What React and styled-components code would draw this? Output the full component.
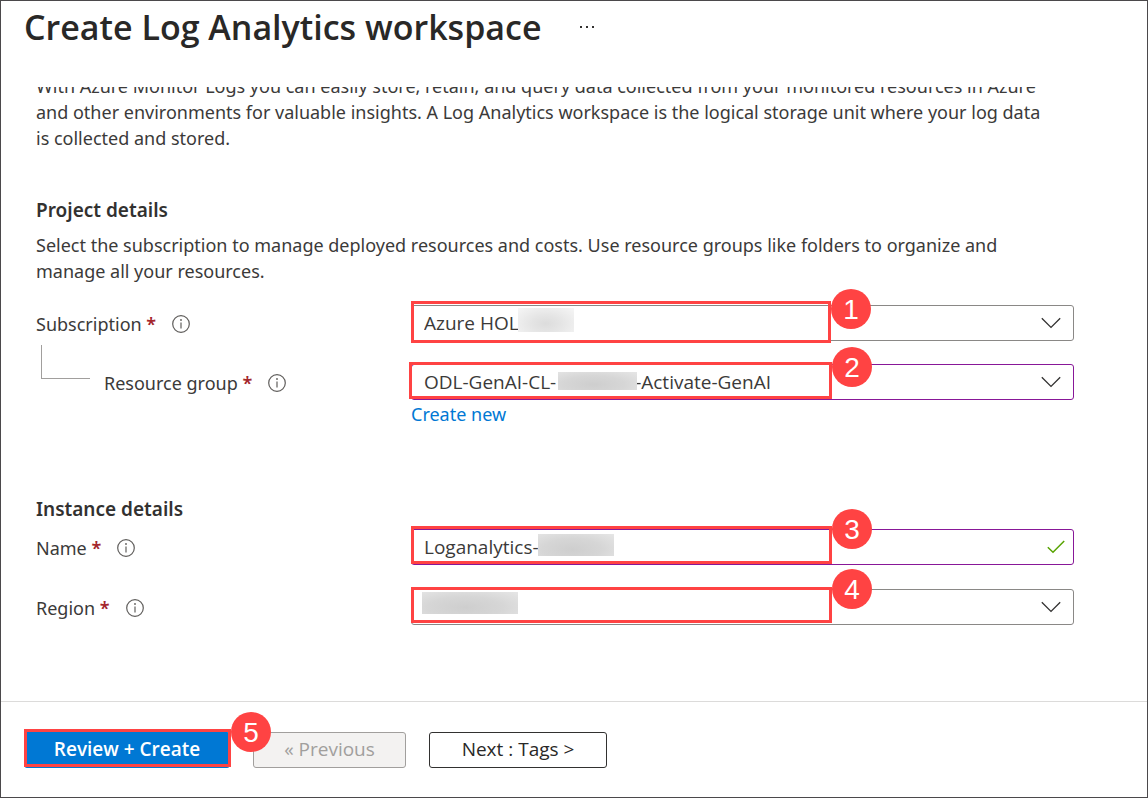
import React from "react";
import styled, { createGlobalStyle } from "styled-components";

const textFont = `"Segoe UI", "Noto Sans", sans-serif`;
const controlFont = `"Segoe UI", "Open Sans", sans-serif`;

const GlobalStyle = createGlobalStyle`
  *, *::before, *::after { box-sizing: border-box; }
  body {
    margin: 0;
    background: #fff;
    color: #3b3a39;
    font-family: ${textFont};
    font-size: 18px;
    line-height: 26px;
  }
`;

const Page = styled.div`
  display: flex;
  flex-direction: column;
  min-height: 100vh;
  border: 1px solid #4b494b;
`;

const Header = styled.header`
  display: flex;
  align-items: center;
  gap: 37px;
  height: 86px;
  padding: 0 23px 34px;
`;

const Title = styled.h1`
  margin: 0;
  font-family: ${controlFont};
  font-size: 34px;
  line-height: 48px;
  font-weight: 600;
  color: #292827;
  white-space: nowrap;
`;

const MoreButton = styled.button`
  display: flex;
  padding: 0;
  border: 0;
  background: none;
`;

const Content = styled.main`
  flex: 1;
  overflow: hidden;
  padding: 0 73px 40px 35px;
`;

const Text = styled.p`
  max-width: 1012px;
  margin: 0;
`;

const Intro = styled(Text)`
  margin-top: -14px;
`;

const Section = styled.section`
  margin-top: ${(p) => p.$gap}px;
`;

const SectionTitle = styled.h2`
  margin: 0;
  padding-bottom: ${(p) => p.$gap}px;
  color: #323130;
  font-size: 19px;
  line-height: 26px;
  font-weight: 600;
`;

const Row = styled.div`
  display: grid;
  grid-template-columns: 375px minmax(0, 1fr);
  margin-top: ${(p) => p.$gap}px;
`;

const LabelCell = styled.div`
  display: flex;
  align-items: center;
  height: 36px;
  padding-top: 2px;
`;

const Label = styled.label`
  margin-right: 16px;
`;

const Required = styled.span`
  color: #a4262c;
  font-weight: 600;
`;

const Branch = styled.span`
  align-self: flex-start;
  width: 49px;
  height: 34px;
  margin: -21px 14px 0 5px;
  border: solid #a19f9d;
  border-width: 0 0 1px 1px;
`;

const Field = styled.div`
  position: relative;
  height: 36px;
`;

const controlStyle = `
  display: block;
  width: 100%;
  height: 36px;
  padding: 0 12px;
  border-radius: 3px;
  background: #fff;
  color: #3b3a39;
  font: 19px/26px ${controlFont};
  outline: none;
`;

const Select = styled.select`
  ${controlStyle}
  appearance: none;
  border: 1px solid ${(p) => (p.$edited ? "#881798" : "#8a8886")};
`;

const Input = styled.input`
  ${controlStyle}
  border: 1px solid ${(p) => (p.$edited ? "#881798" : "#8a8886")};
`;

const FieldIcon = styled.span`
  position: absolute;
  top: 0;
  right: ${(p) => p.$right}px;
  display: flex;
  align-items: center;
  height: 36px;
  pointer-events: none;
`;

const Redaction = styled.span`
  position: absolute;
  top: ${(p) => p.$top}px;
  left: ${(p) => p.$left}px;
  width: ${(p) => p.$width}px;
  height: ${(p) => p.$height}px;
  background: ${(p) =>
    p.$light
      ? "radial-gradient(ellipse at 50% 65%, #dcdcdc 0%, #e4e4e4 35%, #f6f6f6 100%)"
      : "radial-gradient(ellipse at 45% 70%, #cecece 0%, #d6d6d6 50%, #e6e6e6 100%)"};
  pointer-events: none;
`;

const Highlight = styled.span`
  position: absolute;
  top: ${(p) => p.$top}px;
  left: ${(p) => p.$left || 0}px;
  width: ${(p) => p.$width}px;
  height: ${(p) => p.$height}px;
  border: 3px solid #ff4343;
  pointer-events: none;
`;

const Badge = styled.span`
  position: absolute;
  top: ${(p) => p.$top}px;
  left: ${(p) => p.$left}px;
  z-index: 1;
  width: 40px;
  height: 40px;
  border-radius: 50%;
  background: #ff4343;
  color: #fff;
  font: 28px/42px "Liberation Sans", Arial, sans-serif;
  text-align: center;
  pointer-events: none;
`;

const LinkLine = styled.div`
  grid-column: 2;
  line-height: 28px;
`;

const Link = styled.a`
  color: #0078d4;
  text-decoration: none;
`;

const Footer = styled.footer`
  display: flex;
  gap: 23px;
  padding: 30px 23px 29px;
  border-top: 1px solid #dcdbda;
`;

const ButtonSlot = styled.div`
  position: relative;
`;

const Button = styled.button`
  width: ${(p) => p.$width}px;
  height: 36px;
  padding: 0 0 2px;
  border: 1px solid #323130;
  border-radius: 3px;
  background: #fff;
  color: #292827;
  font: 500 19px/26px ${controlFont};

  &:disabled {
    border-color: #a19f9d;
    background: #f3f2f1;
    color: #a19f9d;
  }
`;

const PrimaryButton = styled(Button)`
  border-color: #0078d4;
  background: #0078d4;
  color: #fff;
  font-weight: 600;
`;

const InfoIcon = () => (
  <svg width="18" height="18" viewBox="0 0 18 18" fill="none" aria-hidden="true">
    <circle cx="9" cy="9" r="8.3" stroke="#605e5c" strokeWidth="1.2" />
    <path d="M9 7.4v6" stroke="#605e5c" strokeWidth="1.2" />
    <circle cx="9" cy="5" r="0.9" fill="#605e5c" />
  </svg>
);

const Chevron = () => (
  <svg width="20" height="12" viewBox="0 0 20 12" fill="none" aria-hidden="true">
    <path d="M0.8 1.2L10 10.4L19.2 1.2" stroke="#323130" strokeWidth="1.3" />
  </svg>
);

const Check = () => (
  <svg width="18" height="14" viewBox="0 0 18 14" fill="none" aria-hidden="true">
    <path d="M0.8 7.2L6 12.2L17.2 1" stroke="#57a300" strokeWidth="1.5" />
  </svg>
);

const nbsp = (count) => "\u00a0".repeat(count);

function FieldLabel({ htmlFor, children, nested }) {
  return (
    <LabelCell>
      {nested && <Branch />}
      <Label htmlFor={htmlFor}>
        {children} <Required>*</Required>
      </Label>
      <InfoIcon />
    </LabelCell>
  );
}

export default function App() {
  return (
    <>
      <GlobalStyle />
      <Page>
        <Header>
          <Title>Create Log Analytics workspace</Title>
          <MoreButton type="button" aria-label="More actions">
            <svg width="18" height="4" viewBox="0 0 18 4" fill="#323130" aria-hidden="true">
              <rect x="1" y="1" width="2" height="2" />
              <rect x="7" y="1" width="2" height="2" />
              <rect x="13" y="1" width="2" height="2" />
            </svg>
          </MoreButton>
        </Header>

        <Content>
          <Intro>
            With Azure Monitor Logs you can easily store, retain, and query data collected from your
            monitored resources in Azure and other environments for valuable insights. A Log
            Analytics workspace is the logical storage unit where your log data is collected and
            stored.
          </Intro>

          <Section $gap={46}>
            <SectionTitle $gap={9}>Project details</SectionTitle>
            <Text>
              Select the subscription to manage deployed resources and costs. Use resource groups
              like folders to organize and manage all your resources.
            </Text>
            <Row $gap={21}>
              <FieldLabel htmlFor="subscription">Subscription</FieldLabel>
              <Field>
                <Select id="subscription">
                  <option>Azure HOL</option>
                </Select>
                <Redaction $light $top={3} $left={107} $width={56} $height={24} />
                <FieldIcon $right={13}><Chevron /></FieldIcon>
                <Highlight $top={-4} $width={420} $height={42} />
                <Badge $top={-16} $left={420}>1</Badge>
              </Field>
            </Row>
            <Row $gap={23}>
              <FieldLabel htmlFor="resource-group" nested>Resource group</FieldLabel>
              <Field>
                <Select id="resource-group" $edited>
                  <option>{`ODL-GenAI-CL-${nbsp(16)}-Activate-GenAI`}</option>
                </Select>
                <Redaction $top={8} $left={147} $width={79} $height={18} />
                <FieldIcon $right={13}><Chevron /></FieldIcon>
                <Highlight $top={-2} $left={-2} $width={423} $height={37} />
                <Badge $top={-17} $left={421}>2</Badge>
              </Field>
              <LinkLine><Link href="#create">Create new</Link></LinkLine>
            </Row>
          </Section>

          <Section $gap={68}>
            <SectionTitle $gap={7}>Instance details</SectionTitle>
            <Row $gap={0}>
              <FieldLabel htmlFor="name">Name</FieldLabel>
              <Field>
                <Input id="name" type="text" defaultValue="Loganalytics-" $edited />
                <Redaction $top={5} $left={127} $width={76} $height={22} />
                <FieldIcon $right={9}><Check /></FieldIcon>
                <Highlight $top={-3} $width={421} $height={38} />
                <Badge $top={-20} $left={421}>3</Badge>
              </Field>
            </Row>
            <Row $gap={24}>
              <FieldLabel htmlFor="region">Region</FieldLabel>
              <Field>
                <Select id="region" />
                <Redaction $top={3} $left={11} $width={96} $height={22} />
                <FieldIcon $right={13}><Chevron /></FieldIcon>
                <Highlight $top={-2} $width={421} $height={36} />
                <Badge $top={-20} $left={421}>4</Badge>
              </Field>
            </Row>
          </Section>
        </Content>

        <Footer>
          <ButtonSlot>
            <PrimaryButton type="button" $width={206}>Review + Create</PrimaryButton>
            <Highlight $top={-3} $width={207} $height={38} />
            <Badge $top={-20} $left={207}>5</Badge>
          </ButtonSlot>
          <Button type="button" disabled $width={153}>« Previous</Button>
          <Button type="button" $width={178}>Next : Tags &gt;</Button>
        </Footer>
      </Page>
    </>
  );
}
